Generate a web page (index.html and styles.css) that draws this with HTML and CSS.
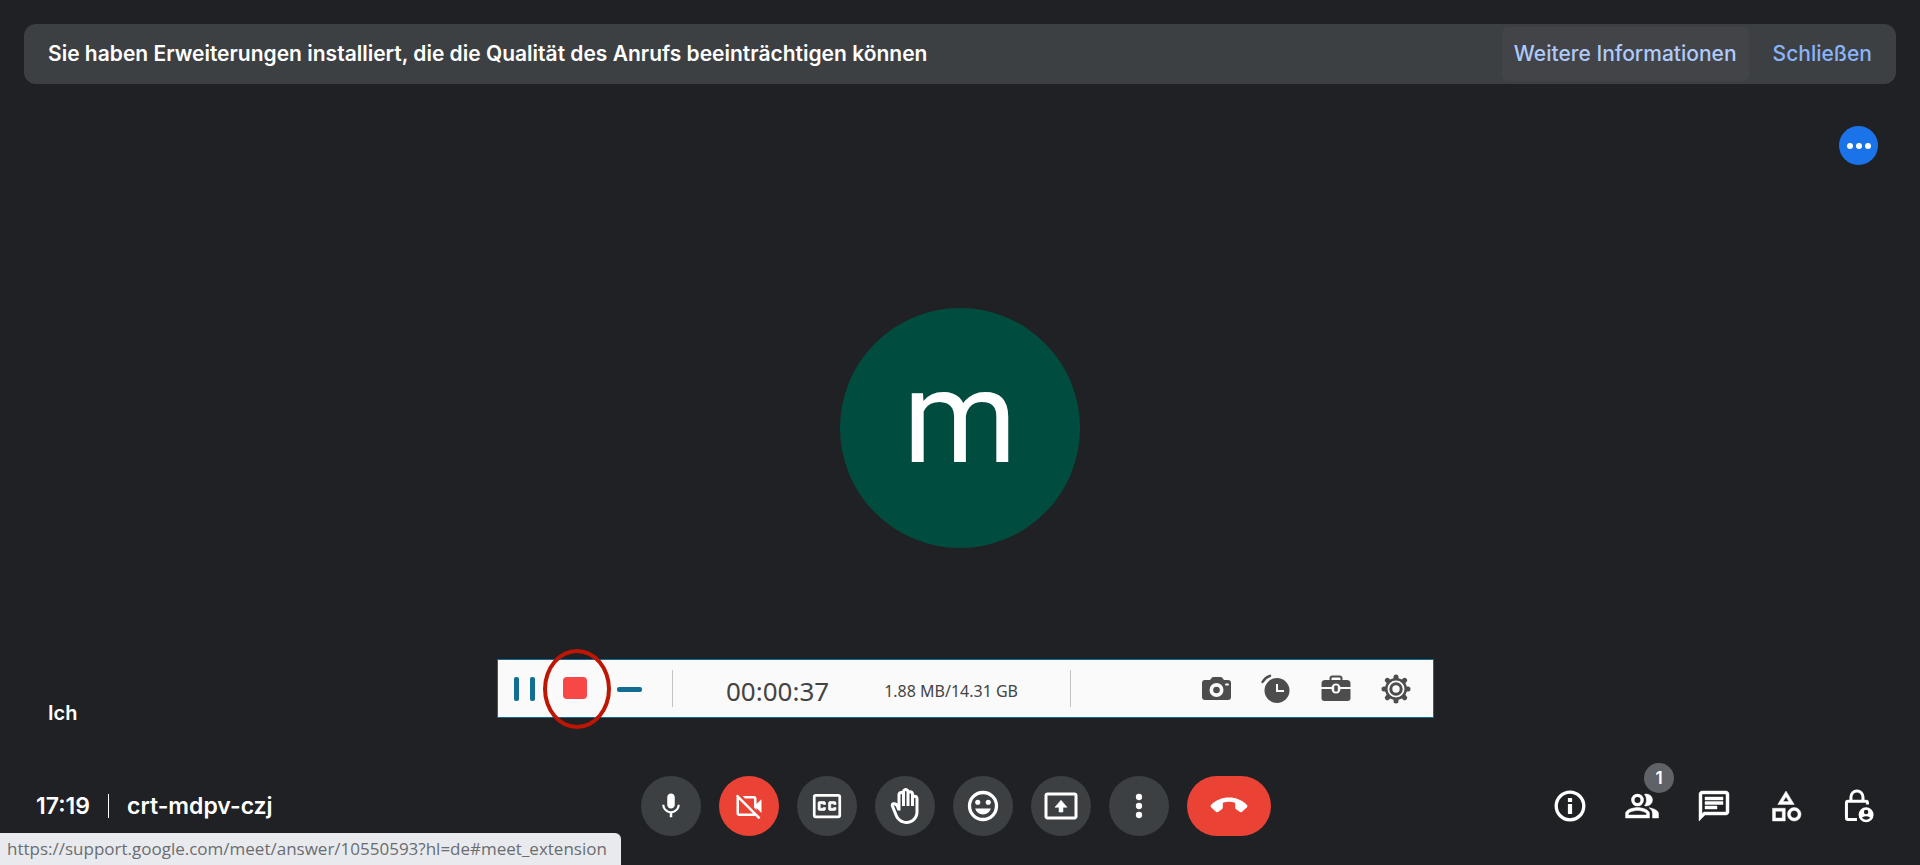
FILE: index.html
```html
<!DOCTYPE html>
<html lang="de">
<head>
<meta charset="utf-8">
<title>Meet – crt-mdpv-czj</title>
<link rel="stylesheet" href="styles.css">
</head>
<body>
<div class="call">
  <header class="notice">
    <p class="notice-text">Sie haben Erweiterungen installiert, die die Qualität des Anrufs beeinträchtigen können</p>
    <a class="notice-action notice-action-active" href="#meet_extension">Weitere Informationen</a>
    <button class="notice-action" type="button">Schließen</button>
  </header>

  <main class="stage">
    <button class="tile-menu" type="button" aria-label="Weitere Optionen">
      <svg width="24" height="24" viewBox="0 0 24 24" fill="#fff"><circle cx="3" cy="12" r="3"/><circle cx="12" cy="12" r="3"/><circle cx="21" cy="12" r="3"/></svg>
    </button>
    <div class="avatar">m</div>
    <div class="tile-name">Ich</div>
  </main>

  <footer class="bar">
    <div class="meeting">
      <span>17:19</span>
      <span class="meeting-rule"></span>
      <span>crt-mdpv-czj</span>
    </div>
    <div class="controls">
      <button class="round" type="button" aria-label="Mikrofon">
        <svg class="icon-small" viewBox="0 0 24 24"><path d="M12 14c1.66 0 3-1.34 3-3V5c0-1.66-1.34-3-3-3S9 3.340 9 5v6c0 1.660 1.340 3 3 3zM17.300 11c0 3-2.540 5.100-5.300 5.100S6.700 14 6.700 11H5c0 3.410 2.720 6.230 6 6.720V21h2v-3.280c3.280-.48 6-3.300 6-6.720h-1.700z"/></svg>
      </button>
      <button class="round round-red" type="button" aria-label="Kamera aus">
        <svg class="icon-small" viewBox="0 0 24 24"><path d="M18 10.480V6c0-1.100-.9-2-2-2H6.830l2 2H16v7.170l2 2v-1.650l4 3.980v-11l-4 3.980zM16 16L6 6 4 4 2.810 2.810 1.390 4.220l.85.85C2.090 5.350 2 5.660 2 6v12c0 1.100.9 2 2 2h12c.34 0 .65-.09.93-.24l2.850 2.850 1.410-1.410L18 18l-2-2zM4 18V6.830L15.170 18H4z"/></svg>
      </button>
      <button class="round" type="button" aria-label="Untertitel">
        <svg class="icon" viewBox="0 0 24 24"><rect x="3.500" y="4.900" width="17" height="14.300" rx="1" fill="none" stroke="#fff" stroke-width="1.800"/><path d="M7 15h3c.55 0 1-.45 1-1v-1H9.500v.5h-2v-3h2v.5H11v-1c0-.55-.45-1-1-1H7c-.55 0-1 .45-1 1v4c0 .55.45 1 1 1zm7 0h3c.55 0 1-.45 1-1v-1h-1.500v.5h-2v-3h2v.5H18v-1c0-.55-.45-1-1-1h-3c-.55 0-1 .45-1 1v4c0 .55.45 1 1 1z" stroke="#fff" stroke-width=".4"/></svg>
      </button>
      <button class="round" type="button" aria-label="Hand heben">
        <svg class="icon" viewBox="0 0 24 24"><path d="M21 7c0-1.380-1.120-2.500-2.500-2.500-.17 0-.34.02-.5.05V4c0-1.380-1.120-2.500-2.500-2.500-.23 0-.46.03-.67.09C14.460.66 13.560 0 12.500 0c-1.230 0-2.250.89-2.460 2.060C9.870 2.020 9.690 2 9.500 2 8.120 2 7 3.120 7 4.500v5.890c-.34-.31-.76-.54-1.220-.66L5.010 9.520c-.83-.23-1.700.09-2.190.83-.38.57-.4 1.310-.15 1.950l2.560 6.430C6.490 21.910 9.570 24 13 24c4.420 0 8-3.580 8-8V7zm-2 9c0 3.310-2.690 6-6 6-2.610 0-4.950-1.590-5.910-4.010l-2.600-6.540.53.14c.46.12.83.46 1 .9L7 15h2V4.500c0-.28.22-.5.5-.5s.5.22.5.5V12h2V2.500c0-.28.22-.5.5-.5s.5.22.5.5V12h2V4c0-.28.22-.5.5-.5s.5.22.5.5v8h2V7c0-.28.22-.5.5-.5s.5.22.5.5v9z"/></svg>
      </button>
      <button class="round" type="button" aria-label="Reaktionen">
        <svg class="icon" viewBox="0 0 24 24"><circle cx="12" cy="12" r="9" fill="none" stroke="#fff" stroke-width="2.200"/><circle cx="8.500" cy="9.500" r="1.700"/><circle cx="15.500" cy="9.500" r="1.700"/><path d="M6.800 13.700h10.400c-.7 2.400-2.700 3.900-5.200 3.900s-4.500-1.500-5.200-3.900z"/></svg>
      </button>
      <button class="round" type="button" aria-label="Bildschirm präsentieren">
        <svg class="icon" viewBox="0 0 24 24"><path d="M21 3H3c-1.110 0-2 .89-2 2v14c0 1.110.89 2 2 2h18c1.110 0 2-.89 2-2V5c0-1.110-.89-2-2-2zm0 16H3V5h18v14z"/><path d="M10.700 16v-3.200H8L12 8.200l4 4.600h-2.700V16z" stroke="#fff" stroke-width=".4"/></svg>
      </button>
      <button class="round" type="button" aria-label="Weitere Optionen">
        <svg class="icon" viewBox="0 0 24 24"><circle cx="12" cy="6" r="2.100"/><circle cx="12" cy="12" r="2.100"/><circle cx="12" cy="18" r="2.100"/></svg>
      </button>
      <button class="round round-red hangup" type="button" aria-label="Anruf verlassen">
        <svg class="icon" viewBox="0 0 24 24"><path d="M12 6.400c-4.600 0-8.900 1.700-12 5-.4.5-.4 1 0 1.400l3.300 3c.5.5 1.100.5 1.600.1l2.400-1.800c.4-.3.6-.7.6-1.200V9.800c2.700-.8 5.500-.8 8.200 0v3.100c0 .5.2.9.6 1.200l2.400 1.800c.5.4 1.100.4 1.600-.1l3.300-3c.4-.4.4-.9 0-1.400-3.100-3.300-7.400-5-12-5z"/></svg>
      </button>
    </div>
    <div class="panels">
      <button class="panel" type="button" aria-label="Besprechungsdetails">
        <svg class="icon" viewBox="0 0 24 24"><path d="M11 7h2v2h-2zm0 4h2v6h-2z" stroke="#fff" stroke-width=".8"/><circle cx="12" cy="12" r="9.200" fill="none" stroke="#fff" stroke-width="2.200"/></svg>
      </button>
      <button class="panel" type="button" aria-label="Personen">
        <svg class="icon" viewBox="0 0 24 24"><circle cx="9" cy="8" r="3.100" fill="none" stroke="#fff" stroke-width="2.200"/><path d="M9 13c-2.670 0-8 1.340-8 4v3h16v-3c0-2.660-5.330-4-8-4zm6 5H3v-.99C3.200 16.290 6.300 15 9 15s5.800 1.290 6 2V18zM15 12a4 4 0 0 0 0-8c-.47 0-.91.1-1.330.24A5.980 5.980 0 0 1 15 8c0 1.400-.5 2.700-1.330 3.760.42.14.86.24 1.330.24zM16.670 13.130C18.040 14.060 19 15.320 19 17v3h4v-3c0-2.180-3.580-3.470-6.330-3.870z" stroke="#fff" stroke-width=".3"/></svg>
        <span class="badge">1</span>
      </button>
      <button class="panel" type="button" aria-label="Chat">
        <svg class="icon" viewBox="0 0 24 24"><path d="M4 4h16v12H5.170L4 17.170V4m0-2c-1.100 0-1.990.9-1.990 2L2 22l4-4h14c1.100 0 2-.9 2-2V4c0-1.100-.9-2-2-2H4zm2 10h8v2H6v-2zm0-3h12v2H6V9zm0-3h12v2H6V6z" stroke="#fff" stroke-width=".3"/></svg>
      </button>
      <button class="panel" type="button" aria-label="Aktivitäten">
        <svg class="icon" viewBox="0 0 24 24"><path d="M12 2l-5.500 9h11L12 2zm0 3.840L13.930 9h-3.870L12 5.840zM17.500 13c-2.490 0-4.500 2.010-4.500 4.500s2.010 4.500 4.500 4.500 4.500-2.010 4.500-4.500-2.010-4.500-4.500-4.500zm0 7c-1.380 0-2.500-1.120-2.500-2.500s1.120-2.500 2.500-2.500 2.500 1.120 2.500 2.500-1.120 2.500-2.500 2.500zM3 22h8.500v-8.500H3V22zm2-6.500h4.500V20H5v-4.500z" stroke="#fff" stroke-width=".3"/></svg>
      </button>
      <button class="panel" type="button" aria-label="Organisatorsteuerung">
        <svg class="icon" viewBox="0 0 24 24"><g fill="none" stroke="#fff" stroke-width="2"><path d="M7.300 8.500V6a4 4 0 0 1 8 0v2.500"/><path d="M18.300 11V9.800q0-1-1-1H5.300q-1 0-1 1v10.200q0 1 1 1h6"/></g><path fill-rule="evenodd" d="M17.400 12.800a5 5 0 1 0 0 10 5 5 0 0 0 0-10zm0 1.700a1.500 1.500 0 1 1 0 3 1.500 1.500 0 0 1 0-3zm0 6.600c-1.100 0-2.100-.5-2.700-1.400.9-.6 1.800-.9 2.700-.9s1.800.3 2.700.9c-.6.9-1.600 1.400-2.700 1.400z"/></svg>
      </button>
    </div>
  </footer>

  <section class="recorder" aria-label="Bildschirmaufnahme">
    <button class="rec-button" type="button" aria-label="Pause">
      <svg width="24" height="24" viewBox="0 0 24 24" fill="#136d92"><rect x="2" y="0" width="5" height="24" rx="2"/><rect x="18" y="0" width="5" height="24" rx="2"/></svg>
    </button>
    <button class="rec-button" type="button" aria-label="Stopp">
      <svg width="24" height="24" viewBox="0 0 24 24"><rect x="-1" y="0" width="24" height="22" rx="4" fill="#f94747"/></svg>
      <span class="ring"></span>
    </button>
    <button class="rec-button" type="button" aria-label="Minimieren">
      <svg width="24" height="24" viewBox="0 0 24 24"><rect x="1" y="10" width="25" height="5" rx="2" fill="#136d92"/></svg>
    </button>
    <div class="rec-info">
      <span class="rec-time">00:00:37</span>
      <span class="rec-size">1.88 MB/14.31 GB</span>
    </div>
    <div class="rec-tools">
      <button class="rec-tool" type="button" aria-label="Screenshot">
        <svg width="32" height="32" viewBox="0 0 32 32"><path fill="#4d4d4d" d="M5 7h5l2-2.500Q12.600 4 13.400 4h7.200q.8 0 1.400.5L24 7h4q3 0 3 3v14q0 3-3 3H5q-3 0-3-3V10q0-3 3-3z"/><circle cx="16.500" cy="17" r="7" fill="#fafafa"/><circle cx="16.500" cy="17" r="3.300" fill="#4d4d4d"/><rect x="25" y="10.500" width="4" height="2" rx="1" fill="#fafafa"/></svg>
      </button>
      <button class="rec-tool" type="button" aria-label="Zeitplan">
        <svg width="32" height="32" viewBox="0 0 32 32"><circle cx="17" cy="17.500" r="12.500" fill="#4d4d4d"/><path d="M17 11v7h7" fill="none" stroke="#fafafa" stroke-width="2"/><path d="M2.500 9Q5 4.500 10 2.800" fill="none" stroke="#4d4d4d" stroke-width="2.400" stroke-linecap="round"/></svg>
      </button>
      <button class="rec-tool" type="button" aria-label="Werkzeuge">
        <svg width="32" height="32" viewBox="0 0 32 32"><path d="M10.500 8V5.500q0-2 2-2h7q2 0 2 2V8" fill="none" stroke="#4d4d4d" stroke-width="2"/><path fill="#4d4d4d" d="M5 7h22q3 0 3.500 3v4h-29v-4Q2 7 5 7zM1.500 16h29v9q0 3-3 3h-23q-3 0-3-3z"/><rect x="11.500" y="10.500" width="9" height="10" rx="4.500" fill="#fafafa"/><rect x="14.200" y="12.500" width="3.600" height="6" rx="1" fill="#4d4d4d"/></svg>
      </button>
      <button class="rec-tool" type="button" aria-label="Einstellungen">
        <svg width="32" height="32" viewBox="0 0 32 32"><g fill="none" stroke="#4d4d4d"><path stroke-width="5" stroke-linecap="round" d="M16 4v2M16 26v2M4 16h2M26 16h2M7.300 7.300l1.200 1.200M23.500 23.500l1.200 1.200M7.300 24.700l1.200-1.200M23.500 8.500l1.200-1.200"/><circle cx="16" cy="16" r="9.500" stroke-width="3"/></g><circle cx="16" cy="16" r="8.500" fill="#fafafa"/><circle cx="16" cy="16" r="5.200" fill="none" stroke="#4d4d4d" stroke-width="3"/></svg>
      </button>
    </div>
  </section>

  <div class="status">https://support.google.com/meet/answer/10550593?hl=de#meet_extension</div>
</div>
</body>
</html>
```
FILE: styles.css
```css
* {
  box-sizing: border-box;
}

body {
  margin: 0;
  background: #202124;
  color: #fff;
  font-family: Inter, "Open Sans", sans-serif;
}

button {
  margin: 0;
  padding: 0;
  border: 0;
  background: none;
  color: inherit;
  font: inherit;
  cursor: pointer;
}

svg {
  display: block;
  overflow: visible;
}

.call {
  position: relative;
  display: flex;
  flex-direction: column;
  min-height: 100vh;
}

/* Notice across the top */
.notice {
  display: flex;
  align-items: center;
  gap: 12px;
  margin: 24px 24px 0;
  padding: 3px 12px 3px 24px;
  border-radius: 12px;
  background: #3c4043;
  font-size: 21px;
  font-weight: 600;
  line-height: 24px;
}

.notice-text {
  flex: 1;
  margin: 0;
}

.notice-action {
  padding: 15px 12px;
  border-radius: 6px;
  color: #8ab4f8;
  font-weight: 500;
  text-decoration: none;
}

.notice-action-active {
  background: #424448;
  color: #aecbfa;
}

/* Participant tile */
.stage {
  flex: 1;
  display: grid;
  grid-template-rows: auto 1fr auto;
  padding: 42px 42px 10px;
}

.tile-menu {
  display: grid;
  place-items: center;
  justify-self: end;
  width: 39px;
  height: 39px;
  border-radius: 50%;
  background: #1a73e8;
}

.avatar {
  display: grid;
  place-items: center;
  place-self: center;
  width: 240px;
  height: 240px;
  padding-bottom: 20px;
  border-radius: 50%;
  background: #004d40;
  font-family: Roboto, sans-serif;
  font-size: 130px;
  line-height: 220px;
}

.tile-name {
  padding: 11px 6px;
  font-size: 20px;
  font-weight: 600;
  line-height: 24px;
}

/* Bottom bar */
.bar {
  display: grid;
  grid-template-columns: 1fr auto 1fr;
  align-items: center;
  padding: 30px 44px 29px 36px;
}

.meeting {
  display: flex;
  align-items: center;
  gap: 18px;
  font-size: 23px;
  font-weight: 600;
  line-height: 24px;
}

.meeting-rule {
  width: 1px;
  height: 24px;
  background: #fff;
}

.controls {
  display: flex;
  gap: 18px;
}

.round {
  display: grid;
  place-items: center;
  width: 60px;
  height: 60px;
  border-radius: 30px;
  background: #3c4043;
}

.round-red {
  background: #ea4335;
}

.hangup {
  width: 84px;
}

.icon,
.icon-small {
  width: 36px;
  height: 36px;
  fill: #fff;
}

.icon-small {
  width: 30px;
  height: 30px;
}

.panels {
  display: flex;
  justify-content: flex-end;
  gap: 36px;
}

.panel {
  position: relative;
}

.badge {
  position: absolute;
  top: -25px;
  right: -14px;
  width: 30px;
  height: 30px;
  border-radius: 50%;
  background: #5f6368;
  font-size: 17px;
  font-weight: 600;
  line-height: 30px;
  text-align: center;
}

/* Floating recorder window */
.recorder {
  position: absolute;
  top: 659px;
  left: 497px;
  display: flex;
  align-items: center;
  gap: 28px;
  width: 937px;
  height: 59px;
  padding: 0 21px 0 14px;
  border: 1px solid #136d92;
  background: #fafafa;
  color: #444;
  font-family: "Noto Sans", sans-serif;
}

.rec-button {
  position: relative;
}

.ring {
  position: absolute;
  top: -28px;
  left: -21px;
  width: 68px;
  height: 80px;
  border: 4px solid #bd1604;
  border-radius: 50%;
}

.rec-info {
  display: flex;
  align-items: center;
  justify-content: space-between;
  width: 399px;
  height: 37px;
  margin-left: 4px;
  padding: 4px 52px 0 53px;
  border: solid #c4c4c4;
  border-width: 0 1px;
}

.rec-time {
  font-size: 26px;
}

.rec-size {
  font-size: 16px;
}

.rec-tools {
  display: flex;
  gap: 28px;
  margin-left: auto;
}

/* Link target shown by the browser */
.status {
  position: absolute;
  bottom: 0;
  left: 0;
  padding: 4px 14px 4px 7px;
  border-top-right-radius: 6px;
  background: #e8eaed;
  color: #6a6d71;
  font-family: "Open Sans", sans-serif;
  font-size: 17px;
  line-height: 24px;
}
```
